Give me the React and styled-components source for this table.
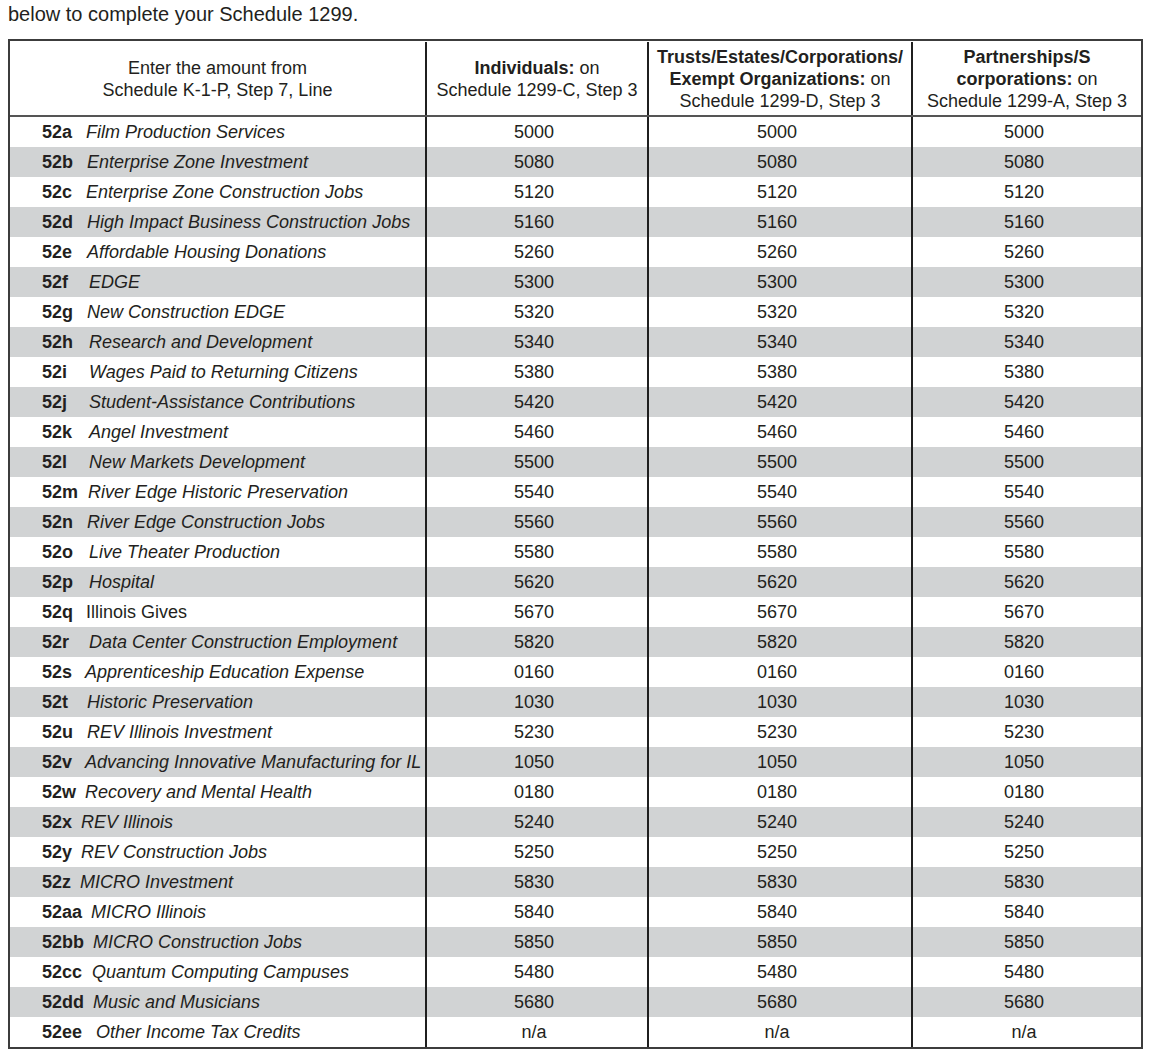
import styled, { createGlobalStyle } from 'styled-components'

const GlobalStyle = createGlobalStyle`
    body{
        margin: 0;
        background: #ffffff;
        color: #231f20;
        font-family: "Liberation Sans", Arial, sans-serif;
    }
`

const Page = styled.div`
    padding: 2px 8px 0;
`

const Intro = styled.p`
    margin: 0 0 13px 0;
    font-size: 20px;
    line-height: 24px;
`

const Table = styled.div`
    width: 1135px;
    box-sizing: border-box;
    border: 2px solid #3c3c3c;
    font-size: 18px;
`

const Row = styled.div`
    display: grid;
    grid-template-columns: 415px 222px 264px 230px;
    height: ${p => (p.$head ? '76px' : '30px')};
    padding-top: ${p => (p.$head ? '1px' : '0')};
    background: ${p => (p.$shade ? '#d1d3d4' : '#ffffff')};
    border-bottom: ${p => (p.$head ? '2px solid #555555' : 'none')};
    box-sizing: border-box;
`

const HeadCell = styled.div`
    display: flex;
    flex-direction: column;
    justify-content: center;
    align-items: center;
    text-align: center;
    line-height: 22px;
    border-left: ${p => (p.$first ? 'none' : '2px solid #1f1f1f')};
    box-sizing: border-box;

    b{
        font-weight: bold;
    }
`

const LabelCell = styled.div`
    display: flex;
    align-items: center;
    padding-left: 32px;
    white-space: nowrap;
`

const Code = styled.span`
    flex: none;
    width: ${p => p.$w}px;
    font-weight: bold;
`

const Desc = styled.span`
    font-style: ${p => (p.$plain ? 'normal' : 'italic')};
`

const Num = styled.div`
    display: flex;
    align-items: center;
    justify-content: center;
    padding-right: 6px;
    border-left: 2px solid #1f1f1f;
    box-sizing: border-box;
`

const rows = [
    ['52a', 'Film Production Services', '5000', 87],
    ['52b', 'Enterprise Zone Investment', '5080', 88],
    ['52c', 'Enterprise Zone Construction Jobs', '5120', 87],
    ['52d', 'High Impact Business Construction Jobs', '5160', 88],
    ['52e', 'Affordable Housing Donations', '5260', 88],
    ['52f', 'EDGE', '5300', 90],
    ['52g', 'New Construction EDGE', '5320', 88],
    ['52h', 'Research and Development', '5340', 90],
    ['52i', 'Wages Paid to Returning Citizens', '5380', 90],
    ['52j', 'Student-Assistance Contributions', '5420', 90],
    ['52k', 'Angel Investment', '5460', 90],
    ['52l', 'New Markets Development', '5500', 90],
    ['52m', 'River Edge Historic Preservation', '5540', 89],
    ['52n', 'River Edge Construction Jobs', '5560', 88],
    ['52o', 'Live Theater Production', '5580', 90],
    ['52p', 'Hospital', '5620', 90],
    ['52q', 'Illinois Gives', '5670', 87, true],
    ['52r', 'Data Center Construction Employment', '5820', 90],
    ['52s', 'Apprenticeship Education Expense', '0160', 86],
    ['52t', 'Historic Preservation', '1030', 88],
    ['52u', 'REV Illinois Investment', '5230', 88],
    ['52v', 'Advancing Innovative Manufacturing for IL', '1050', 86],
    ['52w', 'Recovery and Mental Health', '0180', 86],
    ['52x', 'REV Illinois', '5240', 82],
    ['52y', 'REV Construction Jobs', '5250', 82],
    ['52z', 'MICRO Investment', '5830', 81],
    ['52aa', 'MICRO Illinois', '5840', 92],
    ['52bb', 'MICRO Construction Jobs', '5850', 94],
    ['52cc', 'Quantum Computing Campuses', '5480', 93],
    ['52dd', 'Music and Musicians', '5680', 94],
    ['52ee', 'Other Income Tax Credits', 'n/a', 97],
]

function App() {
    return (
        <Page>
            <GlobalStyle />
            <Intro>below to complete your Schedule 1299.</Intro>
            <Table>
                <Row $head>
                    <HeadCell $first>
                        <span>Enter the amount from</span>
                        <span>Schedule K-1-P, Step 7, Line</span>
                    </HeadCell>
                    <HeadCell>
                        <span><b>Individuals:</b> on</span>
                        <span>Schedule 1299-C, Step 3</span>
                    </HeadCell>
                    <HeadCell>
                        <span><b>Trusts/Estates/Corporations/</b></span>
                        <span><b>Exempt Organizations:</b> on</span>
                        <span>Schedule 1299-D, Step 3</span>
                    </HeadCell>
                    <HeadCell>
                        <span><b>Partnerships/S</b></span>
                        <span><b>corporations:</b> on</span>
                        <span>Schedule 1299-A, Step 3</span>
                    </HeadCell>
                </Row>
                {rows.map(([code, desc, num, x, plain], i) => (
                    <Row key={code} $shade={i % 2 === 1}>
                        <LabelCell>
                            <Code $w={x - 43}>{code}</Code>
                            <Desc $plain={plain}>{desc}</Desc>
                        </LabelCell>
                        <Num>{num}</Num>
                        <Num>{num}</Num>
                        <Num>{num}</Num>
                    </Row>
                ))}
            </Table>
        </Page>
    )
}

export default App
